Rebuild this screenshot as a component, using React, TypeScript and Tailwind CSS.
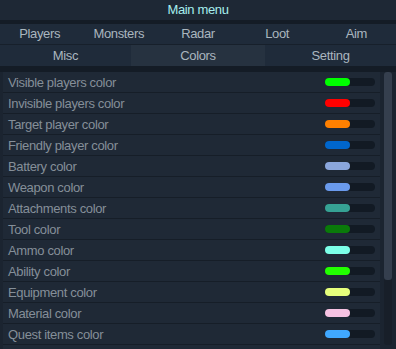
import React from "react";

const tabsTop = ["Players", "Monsters", "Radar", "Loot", "Aim"];
const tabsBottom = ["Misc", "Colors", "Setting"];

const rows: { label: string; color: string }[] = [
  { label: "Visible players color", color: "#00ff00" },
  { label: "Invisible players color", color: "#ff0000" },
  { label: "Target player color", color: "#ff8000" },
  { label: "Friendly player color", color: "#0066cc" },
  { label: "Battery color", color: "#8aa6dc" },
  { label: "Weapon color", color: "#6a9aec" },
  { label: "Attachments color", color: "#36a294" },
  { label: "Tool color", color: "#0a7a0a" },
  { label: "Ammo color", color: "#7cffe8" },
  { label: "Ability color", color: "#22ff00" },
  { label: "Equipment color", color: "#e6ff7c" },
  { label: "Material color", color: "#f6c2e2" },
  { label: "Quest items color", color: "#40a8ff" },
];

export default function App() {
  return (
    <div
      className="w-[396px] h-[349px] overflow-hidden bg-[#1b2430] flex flex-col tracking-[-0.35px]"
      style={{ fontFamily: '"Liberation Sans", Arial, sans-serif' }}
    >
      <div className="h-[20px] bg-[#1e2835] flex items-center justify-center text-[13px] text-[#a6eeee]">
        Main menu
      </div>
      <div className="h-[4px] bg-[#141c26]" />
      <div className="h-[21px] bg-[#1f2b3a] grid grid-cols-5 border-b border-[#17202b]">
        {tabsTop.map((t) => (
          <div key={t} className="flex items-center justify-center text-[13px] text-[#aab6bf]">
            {t}
          </div>
        ))}
      </div>
      <div className="h-[21px] bg-[#1f2b3a] grid grid-cols-[131px_134px_131px]">
        {tabsBottom.map((t) => (
          <div
            key={t}
            className={
              "flex items-center justify-center text-[13px] text-[#aab6bf] " +
              (t === "Colors" ? "bg-[#263240]" : "")
            }
          >
            {t}
          </div>
        ))}
      </div>
      <div className="h-[6px] bg-[#141c26]" />
      <div className="flex-1 flex min-h-0">
        <div className="ml-[3px] w-[377px] bg-[#1f2936] flex flex-col">
          {rows.map((r) => (
            <div
              key={r.label}
              className="h-[21px] shrink-0 flex items-center border-b border-[#161e28] pl-[5px]"
            >
              <span className="flex-1 text-[13px] text-[#858f99] pt-[1px]">{r.label}</span>
              <div className="w-[50px] h-[8px] rounded-full bg-[#121a24] mr-[5px] flex">
                <div className="w-[25px] h-[8px] rounded-full" style={{ backgroundColor: r.color }} />
              </div>
            </div>
          ))}
        </div>
        <div className="w-[16px] flex justify-center">
          <div className="w-[8px] h-[273px] rounded-[3px] bg-[#181f29]">
            <div className="w-[8px] h-[208px] rounded-[3px] bg-[#353f4e]" />
          </div>
        </div>
      </div>
    </div>
  );
}
